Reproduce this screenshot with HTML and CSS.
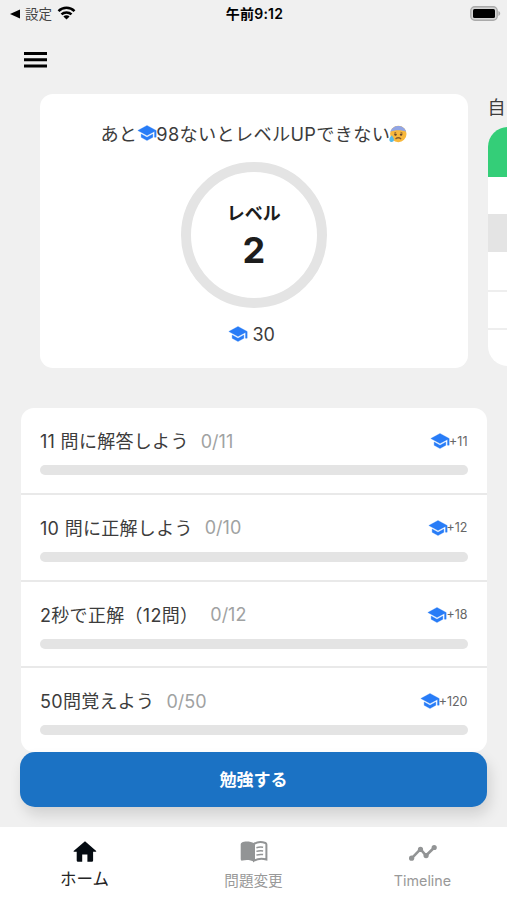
FILE: index.html
```html
<!DOCTYPE html>
<html lang="ja">
<head>
<meta charset="utf-8">
<meta name="viewport" content="width=device-width, initial-scale=1">
<title>ホーム</title>
<link rel="stylesheet" href="styles.css">
</head>
<body>
<svg class="defs" aria-hidden="true">
  <symbol id="cap" viewBox="0 0 24 24"><path d="M5 13.18v4L12 21l7-3.82v-4L12 17l-7-3.82zM12 3L1 9l11 6 9-4.91V17h2V9L12 3z"/></symbol>
</svg>
<div class="app">
  <header class="status">
    <div class="status-left">
      <svg class="back" viewBox="0 0 10 10"><path d="M0 5L10 .4v9.2z"/></svg>
      <span>設定</span>
      <svg class="wifi" viewBox="0 0 18 14"><g fill="none" stroke="#000" stroke-width="2.5"><path d="M1 5.1a11.4 11.4 0 0 1 16 0"/><path d="M4 8.4a7.2 7.2 0 0 1 10 0"/></g><path d="M9 13.6L5.9 10.5a4.4 4.4 0 0 1 6.2 0z"/></svg>
    </div>
    <span class="clock">午前9:12</span>
    <svg class="battery" viewBox="0 0 31 15"><rect x=".8" y=".8" width="26.4" height="13.4" rx="4" fill="#d5d5d5" stroke="#aaa" stroke-width="1.4"/><rect x="3" y="3" width="22" height="9" rx="1.5"/><path d="M28.4 5.1c2.4.7 2.4 4.1 0 4.8z" fill="#aaa"/></svg>
  </header>
  <div class="toolbar"><svg class="menu" viewBox="0 0 23 16"><path d="M0 0h23v3H0zM0 6.2h23v3H0zM0 12.4h23v3H0z"/></svg></div>

  <section class="carousel">
    <article class="level-card">
      <p class="hint"><span>あと</span><svg class="cap"><use href="#cap"/></svg><span>98ないとレベルUPできない</span><svg class="emoji" viewBox="0 0 18 18"><circle cx="9.3" cy="9" r="8.2" fill="#f8b83c"/><path d="M1.5 6.8C3.3-.8 15.3-.8 17.1 6.8 12.5 4.8 6 4.8 1.5 6.8z" fill="#91a5e5"/><path d="M5 8.2l2.2-.9M13.7 8.2l-2.2-.9" stroke="#98692b" stroke-width=".9"/><circle cx="6.5" cy="9.6" r="1.2" fill="#65452c"/><circle cx="12.1" cy="9.6" r="1.2" fill="#65452c"/><path d="M6.5 14q2.8-2.5 5.6 0" fill="none" stroke="#8a5b27" stroke-width="1.2"/><path d="M2.8 10.2C1 12.3.2 13.5.4 15c.2 2.7 4.3 2.8 4.6.1.1-1.4-.8-2.8-2.2-4.9z" fill="#55b9e8"/></svg></p>
      <div class="ring"><span class="ring-label">レベル</span><strong class="ring-value">2</strong></div>
      <p class="points"><svg class="cap"><use href="#cap"/></svg><span>30</span></p>
    </article>
    <aside class="ranking">
      <h2>自</h2>
      <div class="table"><div class="head"></div><div class="line first"></div><div class="line me"></div><div class="line"></div><div class="line ruled"></div><div class="line ruled"></div></div>
    </aside>
  </section>

  <main class="missions">
    <section class="mission"><div class="row"><span class="title">11 問に解答しよう</span><span class="count">0/11</span><span class="reward"><svg class="cap"><use href="#cap"/></svg>+11</span></div><div class="bar"></div></section>
    <section class="mission"><div class="row"><span class="title">10 問に正解しよう</span><span class="count">0/10</span><span class="reward"><svg class="cap"><use href="#cap"/></svg>+12</span></div><div class="bar"></div></section>
    <section class="mission"><div class="row"><span class="title">2秒で正解（12問）</span><span class="count">0/12</span><span class="reward"><svg class="cap"><use href="#cap"/></svg>+18</span></div><div class="bar"></div></section>
    <section class="mission"><div class="row"><span class="title">50問覚えよう</span><span class="count">0/50</span><span class="reward"><svg class="cap"><use href="#cap"/></svg>+120</span></div><div class="bar"></div></section>
  </main>
  <button class="study" type="button">勉強する</button>

  <nav class="tabs">
    <a class="tab active"><svg class="tab-icon" viewBox="0 0 28 24"><path d="M14 2.2L2.6 12.1q-.4.7.5.7h2.6v8.6q0 1.3 1.3 1.3h4.2v-7.3h5.2v7.3h4.4q1.3 0 1.3-1.3v-8.6h2.6q.9 0 .5-.7z"/></svg><span class="home-label">ホーム</span></a>
    <a class="tab"><svg class="tab-icon" viewBox="0 0 28 24"><path d="M14 4.2C11 2.2 4.5 2 2 3.4Q.7 4 .7 5.2v15q0 1.8 1.8 1.4c4-1 8-.7 11.5 1.2z"/><path d="M14 4.8c3.2-2 8.2-2.1 11.4-.8q1 .4 1 1.5v15c-4-1.2-8.6-.9-12.4 1.2z" fill="#fff" stroke="#929495" stroke-width="2"/><path d="M16.4 8.7q3-1 6.7-.5M16.4 12.4q3-1 6.7-.5M16.4 16.1q3-1 6.7-.5" fill="none" stroke="#929495" stroke-width="1.5"/></svg><span>問題変更</span></a>
    <a class="tab"><svg class="tab-icon" viewBox="0 0 28 24"><path d="M2.6 19.4l8.9-9.2 5.5 6.3 8.6-8.3" fill="none" stroke="#929495" stroke-width="2.6"/><circle cx="2.6" cy="19.2" r="2.6"/><circle cx="11.5" cy="10.4" r="2.6"/><circle cx="17.1" cy="16.6" r="2.6"/><circle cx="25.2" cy="8.5" r="2.6"/></svg><span class="timeline-label">Timeline</span></a>
  </nav>
</div>
</body>
</html>
```
FILE: styles.css
```css
* { box-sizing: border-box; }
body { margin: 0; background: #f0f0f0; color: #3c3c3c; font-family: Inter, "Noto Sans CJK JP", sans-serif; }
p, h2 { margin: 0; }
svg { display: block; flex: none; }
.defs { display: none; }
.app { display: flex; flex-direction: column; width: 507px; height: 900px; overflow: hidden; }

.status { display: grid; grid-template-columns: 1fr auto 1fr; align-items: center; height: 27px; padding: 0 6px 0 8px; flex: none; color: #000; }
.status-left { display: flex; align-items: center; padding-left: 2px; font-size: 13.5px; line-height: 20px; color: #444; }
.status-left span { padding-top: 1px; }
.back { width: 10px; height: 10px; margin-right: 5px; fill: #000; }
.wifi { width: 19px; height: 14px; margin: 0 0 1px 5px; }
.clock { font-size: 14px; line-height: 20px; font-weight: 600; letter-spacing: .2px; }
.battery { width: 31px; height: 15px; justify-self: end; }
.toolbar { height: 67px; padding: 25px 0 0 24px; flex: none; }
.menu { width: 23px; height: 16px; }

.carousel { display: flex; gap: 20px; height: 274px; padding-left: 40px; flex: none; }
.level-card { display: flex; flex-direction: column; align-items: center; flex: 0 0 427.5px; background: #fff; border-radius: 13px; padding-top: 26px; }
.cap { width: 20px; height: 20px; fill: #287cf7; stroke: #287cf7; stroke-width: .4px; }
.hint { display: flex; align-items: center; height: 26px; font-size: 18.2px; line-height: 26px; letter-spacing: .3px; white-space: nowrap; }
.hint .cap { margin: 0 -1px 0 0; }
.hint span { padding-top: 1px; }
.emoji { width: 18px; height: 18px; margin: 2px 0 0 -1px; }
.ring { display: flex; flex-direction: column; align-items: center; width: 146px; height: 146px; margin-top: 16px; padding-top: 29px; border: 10px solid #e4e4e4; border-radius: 50%; color: #1d1d1d; }
.ring-label { font-size: 18px; line-height: 26px; font-weight: 600; }
.ring-value { font-size: 36px; line-height: 47px; font-weight: 700; }
.points { display: flex; align-items: center; gap: 5px; margin: 13px 5px 0 0; height: 26px; font-size: 18px; }
.ranking { flex: 0 0 427px; }
.ranking h2 { height: 33px; line-height: 27px; font-size: 18px; font-weight: 400; }
.table { height: 239px; border-radius: 20px; overflow: hidden; background: #fff; }
.head { height: 50px; background: #34ce78; }
.line { height: 38px; }
.first { height: 37px; }
.me { background: #e4e4e4; }
.ruled { border-top: 2px solid #eee; }

.missions { margin: 40px 20px 0 20.5px; height: 344px; border-radius: 13px; background: #fff; flex: none; overflow: hidden; }
.mission { height: 86.8px; padding: 20px 19.5px 0; border-bottom: 2px solid #e9e9e9; }
.mission:last-child { border: 0; }
.row { display: flex; align-items: center; height: 26px; white-space: nowrap; }
.title { padding-top: 2px; font-size: 18px; line-height: 26px; letter-spacing: .3px; }
.count { margin-left: 12px; font-size: 18px; color: #a0a2a2; }
.reward { display: flex; align-items: center; margin-left: auto; font-size: 12.5px; color: #666; }
.reward .cap { margin-right: -1px; }
.bar { height: 10px; margin-top: 11px; border-radius: 5px; background: #e4e4e4; }

.study { height: 55px; margin: 0 20px; padding: 1px 0 0; border: 0; border-radius: 15px; flex: none; background: #1b72c4; color: #fff; font: 700 17px/54px Inter, "Noto Sans CJK JP", sans-serif; box-shadow: 3px 8px 14px rgba(0, 0, 0, .13); }
.tabs { display: grid; grid-template-columns: repeat(3, 1fr); height: 73px; margin-top: 20px; flex: none; background: #fff; position: relative; }
.tab { display: flex; flex-direction: column; align-items: center; padding-top: 12px; color: #999; fill: #929495; font-size: 14.6px; line-height: 24px; gap: 6px; }
.tab-icon { width: 28px; height: 24px; }
.active { color: #252525; fill: #050b12; }
.home-label { font-size: 16.5px; margin-top: -2px; }
.timeline-label { font-size: 14.3px; }
```
